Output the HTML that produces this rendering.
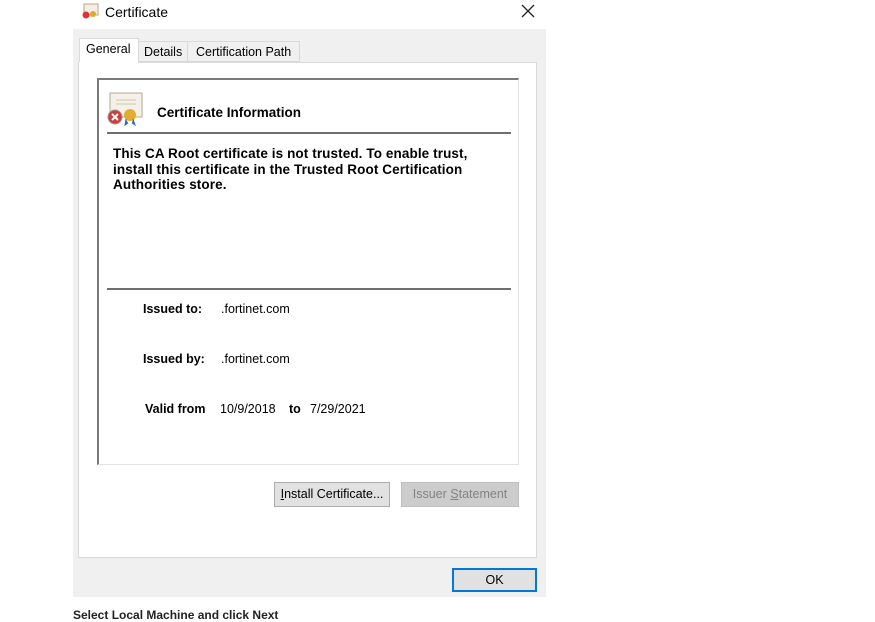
<!DOCTYPE html>
<html><head><meta charset="utf-8"><style>
*{margin:0;padding:0;box-sizing:border-box}
body{width:875px;height:615px;background:#fff;position:relative;overflow:hidden;font-family:"Liberation Sans",sans-serif;font-size:12px;color:#000}
.a{position:absolute}
.b{font-weight:bold}
</style></head><body>
<div class="a" style="left:81px;top:3px;width:18px;height:16px">
<svg width="18" height="16"><rect x="3" y="1" width="14" height="11" fill="#f4eee4" stroke="#b9a58a"/><circle cx="5" cy="12" r="3.5" fill="#d33"/><circle cx="12" cy="11" r="3" fill="#e0a82e"/></svg></div>
<div class="a" style="left:105px;top:4px;font-size:14px">Certificate</div>
<svg class="a" style="left:521px;top:4px" width="14" height="14"><path d="M1 1L13 13M13 1L1 13" stroke="#222" stroke-width="1.3"/></svg>
<div class="a" style="left:73px;top:29px;width:473px;height:568px;background:#f0f0f0"></div>
<div class="a" style="left:79px;top:38px;width:60px;height:26px;background:#fff;border:1px solid #d9d9d9;border-bottom:none"></div>
<div class="a" style="left:86px;top:42px;font-size:12.5px">General</div>
<div class="a" style="left:139px;top:41px;width:49px;height:21px;border:1px solid #d9d9d9;border-left:none;background:#f0f0f0"></div>
<div class="a" style="left:144px;top:45px;font-size:12.5px">Details</div>
<div class="a" style="left:188px;top:41px;width:112px;height:21px;border:1px solid #d9d9d9;border-left:none;background:#f0f0f0"></div>
<div class="a" style="left:196px;top:45px;font-size:12.5px">Certification Path</div>
<div class="a" style="left:78px;top:62px;width:459px;height:496px;background:#fff;border:1px solid #d9d9d9"></div>
<div class="a" style="left:79px;top:62px;width:59px;height:2px;background:#fff"></div>
<div class="a" style="left:97px;top:78px;width:422px;height:387px;border-top:2px solid #7a7a7a;border-left:2px solid #7a7a7a;border-right:1px solid #e3e3e3;border-bottom:1px solid #e3e3e3"></div>
<div class="a" style="left:106px;top:92px;width:38px;height:34px">
<svg width="38" height="34"><rect x="4" y="1" width="32" height="24" fill="#f6f1e8" stroke="#b8a88f"/><line x1="10" y1="8" x2="30" y2="8" stroke="#d2c4ad"/><line x1="10" y1="12" x2="30" y2="12" stroke="#d2c4ad"/><circle cx="9" cy="25" r="7" fill="#d23b3b" stroke="#999"/><path d="M6 22l6 6M12 22l-6 6" stroke="#fff" stroke-width="2"/><circle cx="24" cy="23" r="6" fill="#e4ad32"/><path d="M20 27l-1 6 3-2M27 27l2 6-3-2" fill="#2f6dc1" stroke="#2f6dc1"/></svg></div>
<div class="a b" style="left:157px;top:105px;font-size:13.5px">Certificate Information</div>
<div class="a" style="left:107px;top:132px;width:404px;height:2px;background:#6f6f6f"></div>
<div class="a b" style="left:113px;top:146px;font-size:13.5px;line-height:15.5px;width:400px;white-space:nowrap;letter-spacing:0.1px">This CA Root certificate is not trusted. To enable trust,<br>install this certificate in the Trusted Root Certification<br>Authorities store.</div>
<div class="a" style="left:107px;top:288px;width:404px;height:2px;background:#6f6f6f"></div>
<div class="a b" style="left:143px;top:302px;font-size:12.5px">Issued to:</div>
<div class="a" style="left:221px;top:302px;font-size:12.5px">.fortinet.com</div>
<div class="a b" style="left:143px;top:352px;font-size:12.5px">Issued by:</div>
<div class="a" style="left:221px;top:352px;font-size:12.5px">.fortinet.com</div>
<div class="a b" style="left:145px;top:402px;font-size:12.5px">Valid from</div>
<div class="a" style="left:220px;top:402px;font-size:12.5px">10/9/2018</div>
<div class="a b" style="left:289px;top:402px;font-size:12.5px">to</div>
<div class="a" style="left:310px;top:402px;font-size:12.5px">7/29/2021</div>
<div class="a" style="left:274px;top:482px;width:116px;height:25px;background:#e1e1e1;border:1px solid #adadad;font-size:12.5px;text-align:center;line-height:23px"><u>I</u>nstall Certificate...</div>
<div class="a" style="left:401px;top:482px;width:118px;height:25px;background:#cccccc;border:1px solid #bfbfbf;color:#838383;font-size:12.5px;text-align:center;line-height:23px">Issuer <u>S</u>tatement</div>
<div class="a" style="left:452px;top:568px;width:85px;height:24px;background:#e1e1e1;border:2px solid #0078d7;font-size:12.5px;text-align:center;line-height:20px">OK</div>
<div class="a b" style="left:73px;top:608px;font-size:12px;color:#222">Select Local Machine and click Next</div>
</body></html>
